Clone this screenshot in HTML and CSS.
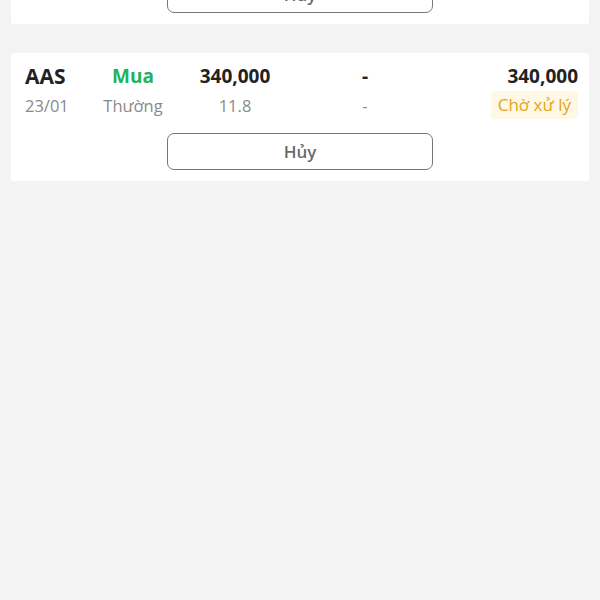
FILE: index.html
```html
<!DOCTYPE html>
<html lang="vi">
<head>
  <meta charset="UTF-8" />
  <title>Sổ lệnh</title>
  <link rel="stylesheet" href="styles.css">
</head>
<body>
  <div class="orders">
    <div class="order">
      <div class="row">
        <div class="col sym">AAS</div>
        <div class="col side buy">Mua</div>
        <div class="col num">340,000</div>
        <div class="col num">-</div>
        <div class="col total">340,000</div>
      </div>
      <div class="row sub">
        <div class="col">23/01</div>
        <div class="col mid">Thường</div>
        <div class="col mid">11.8</div>
        <div class="col mid">-</div>
        <div class="col total"><span class="status">Chờ xử lý</span></div>
      </div>
      <button class="cancel">Hủy</button>
    </div>

    <div class="order">
      <div class="row">
        <div class="col sym">AAS</div>
        <div class="col side buy">Mua</div>
        <div class="col num">340,000</div>
        <div class="col num">-</div>
        <div class="col total">340,000</div>
      </div>
      <div class="row sub">
        <div class="col">23/01</div>
        <div class="col mid">Thường</div>
        <div class="col mid">11.8</div>
        <div class="col mid">-</div>
        <div class="col total"><span class="status">Chờ xử lý</span></div>
      </div>
      <button class="cancel">Hủy</button>
    </div>
  </div>
</body>
</html>
```

FILE: styles.css
```css
body {
  margin: 0;
  font-family: 'Open Sans', 'Noto Sans', sans-serif;
  background-color: #f3f3f3;
  color: #222;
  height: 100vh;
  overflow: hidden;
}

.orders {
  margin-top: -104px;
  padding: 0 11px;
  display: flex;
  flex-direction: column;
  gap: 29px;
}

.order {
  background: #fff;
  border-radius: 3px;
  padding: 9px 11px 11px 14px;
  display: flex;
  flex-direction: column;
}

.row {
  display: grid;
  grid-template-columns: 68px 80px 124px 136px 1fr;
  align-items: center;
  height: 26px;
}

.row.sub {
  margin-top: 3px;
  height: 28px;
  font-size: 16.5px;
  color: #8a8a8a;
}

.col {
  white-space: nowrap;
}

.sym {
  font-size: 21px;
  font-weight: 700;
  color: #222;
}

.side {
  text-align: center;
  font-size: 19px;
  font-weight: 700;
}

.buy {
  color: #1fb35a;
}

.num {
  text-align: center;
  font-size: 19px;
  font-weight: 700;
}

.mid {
  text-align: center;
}

.total {
  text-align: right;
  font-size: 19px;
  font-weight: 700;
}

.row.sub .total {
  font-size: 17px;
  font-weight: 400;
}

.status {
  display: inline-block;
  background: #fef8e5;
  color: #e2a41c;
  padding: 0 7px;
  line-height: 28px;
  border-radius: 4px;
}

.cancel {
  align-self: center;
  margin: 14px 0 0 -3px;
  width: 266px;
  height: 37px;
  background: #fff;
  border: 1.5px solid #777;
  border-radius: 7px;
  font-family: inherit;
  font-size: 17px;
  font-weight: 600;
  color: #6b6b6b;
  cursor: pointer;
}
```
